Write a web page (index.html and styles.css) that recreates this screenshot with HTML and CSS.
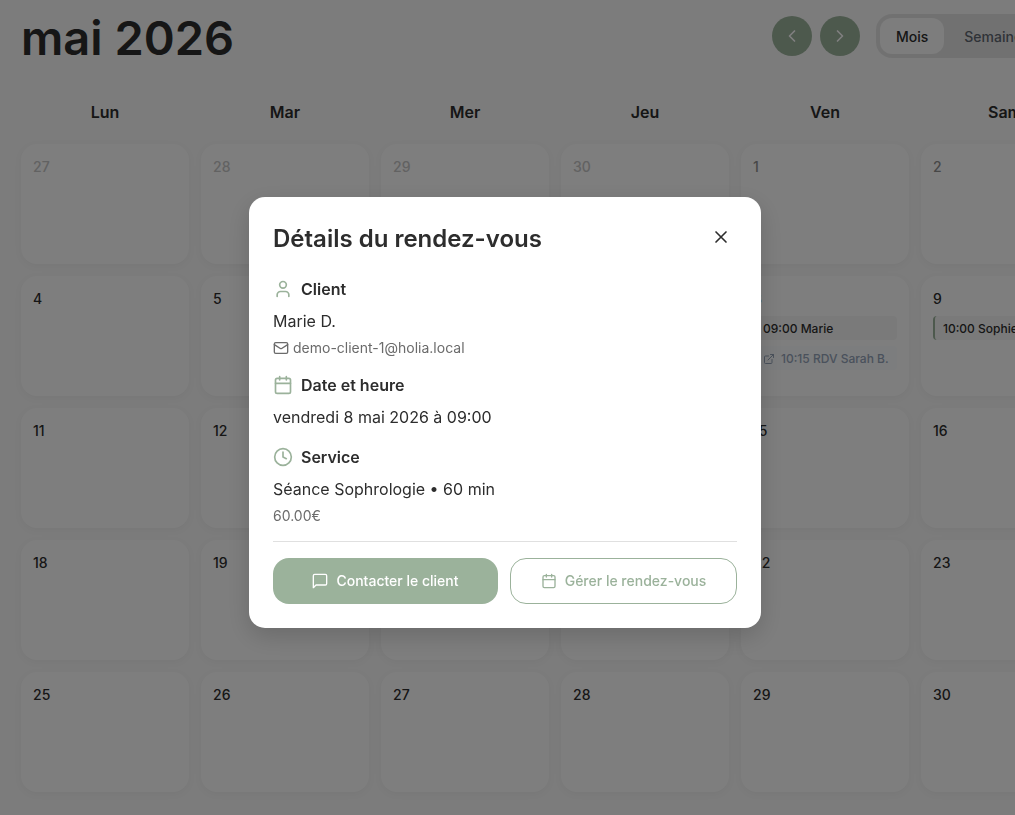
FILE: index.html
```
<!DOCTYPE html>
<html lang="fr">
<head>
    <meta charset="utf-8">
    <title>Calendrier</title>
    <link rel="stylesheet" href="styles.css">
</head>
<body>
    <main class="page">
        <header class="header">
            <h1>mai 2026</h1>
            <div class="controls">
                <button class="nav-btn" aria-label="Mois précédent">
                    <svg class="icon" width="20" height="20" viewBox="0 0 24 24"><path d="M15 18l-6-6 6-6"/></svg>
                </button>
                <button class="nav-btn" aria-label="Mois suivant">
                    <svg class="icon" width="20" height="20" viewBox="0 0 24 24"><path d="M9 18l6-6-6-6"/></svg>
                </button>
                <div class="views">
                    <button class="active">Mois</button>
                    <button>Semaine</button>
                </div>
            </div>
        </header>

        <div class="week days">
            <div>Lun</div><div>Mar</div><div>Mer</div><div>Jeu</div><div>Ven</div><div>Sam</div><div>Dim</div>
        </div>

        <div class="week cells">
            <div class="cell other">27</div>
            <div class="cell other">28</div>
            <div class="cell other">29</div>
            <div class="cell other">30</div>
            <div class="cell past">1</div>
            <div class="cell past">2</div>
            <div class="cell past">3</div>
            <div class="cell">4</div>
            <div class="cell">5</div>
            <div class="cell">6</div>
            <div class="cell">7</div>
            <div class="cell">8
                <div class="event">09:00 Marie</div>
                <div class="event external">
                    <svg class="icon" width="12" height="12" viewBox="0 0 24 24"><path d="M15 3h6v6M10 14L21 3M18 13v6a2 2 0 0 1-2 2H5a2 2 0 0 1-2-2V8a2 2 0 0 1 2-2h6"/></svg>
                    10:15 RDV Sarah B.
                </div>
            </div>
            <div class="cell">9
                <div class="event">10:00 Sophie</div>
            </div>
            <div class="cell">10</div>
            <div class="cell">11</div>
            <div class="cell">12</div>
            <div class="cell">13</div>
            <div class="cell">14</div>
            <div class="cell">15</div>
            <div class="cell">16</div>
            <div class="cell">17</div>
            <div class="cell">18</div>
            <div class="cell">19</div>
            <div class="cell">20</div>
            <div class="cell">21</div>
            <div class="cell">22</div>
            <div class="cell">23</div>
            <div class="cell">24</div>
            <div class="cell">25</div>
            <div class="cell">26</div>
            <div class="cell">27</div>
            <div class="cell">28</div>
            <div class="cell">29</div>
            <div class="cell">30</div>
            <div class="cell">31</div>
        </div>
    </main>

    <div class="overlay">
        <div class="modal" role="dialog" aria-modal="true" aria-labelledby="modal-title">
            <div class="modal-header">
                <h2 id="modal-title">Détails du rendez-vous</h2>
                <button class="close" aria-label="Fermer">
                    <svg class="icon" width="20" height="20" viewBox="0 0 24 24"><path d="M18 6L6 18M6 6l12 12"/></svg>
                </button>
            </div>

            <section>
                <h3>
                    <svg class="icon" width="20" height="20" viewBox="0 0 24 24"><path d="M19 21v-2a4 4 0 0 0-4-4H9a4 4 0 0 0-4 4v2"/><circle cx="12" cy="7" r="4"/></svg>
                    Client
                </h3>
                <p>Marie D.</p>
                <p class="small">
                    <svg class="icon" width="16" height="16" viewBox="0 0 24 24"><rect x="2" y="4" width="20" height="16" rx="2"/><path d="M22 7l-9 5.700a2 2 0 0 1-2 0L2 7"/></svg>
                    demo-client-1@holia.local
                </p>
            </section>

            <section>
                <h3>
                    <svg class="icon" width="20" height="20" viewBox="0 0 24 24"><rect x="3" y="4" width="18" height="18" rx="2"/><path d="M8 2v4M16 2v4M3 10h18"/></svg>
                    Date et heure
                </h3>
                <p>vendredi 8 mai 2026 à 09:00</p>
            </section>

            <section>
                <h3>
                    <svg class="icon" width="20" height="20" viewBox="0 0 24 24"><circle cx="12" cy="12" r="10"/><path d="M12 6v6l4 2"/></svg>
                    Service
                </h3>
                <p>Séance Sophrologie • 60 min</p>
                <p class="small">60.00€</p>
            </section>

            <div class="actions">
                <button class="primary">
                    <svg class="icon" width="16" height="16" viewBox="0 0 24 24"><path d="M22 16a2 2 0 0 1-2 2H6l-4 4V4a2 2 0 0 1 2-2h16a2 2 0 0 1 2 2z"/></svg>
                    Contacter le client
                </button>
                <button class="outline">
                    <svg class="icon" width="16" height="16" viewBox="0 0 24 24"><rect x="3" y="4" width="18" height="18" rx="2"/><path d="M8 2v4M16 2v4M3 10h18"/></svg>
                    Gérer le rendez-vous
                </button>
            </div>
        </div>
    </div>
</body>
</html>
```

FILE: styles.css
```
* {
    box-sizing: border-box;
}
html {
    overflow: hidden;
}
body {
    margin: 0;
    background: #f8f8f8;
    color: #2d2d2d;
    font-family: Inter, "Liberation Sans", sans-serif;
    font-size: 16px;
    line-height: 24px;
}
h1, h2, h3, p {
    margin: 0;
}
button {
    font-family: inherit;
    font-size: 14px;
    font-weight: 500;
    line-height: 20px;
    border: 0;
    background: none;
    color: inherit;
    cursor: pointer;
}
.icon {
    fill: none;
    stroke: currentColor;
    stroke-width: 2;
    stroke-linecap: round;
    stroke-linejoin: round;
    flex-shrink: 0;
}

/* calendar */
.page {
    min-width: 1290px;
    padding: 8px 21px 22px;
}
.header {
    display: grid;
    grid-template-columns: 1fr 497px;
    align-items: center;
}
.header h1 {
    padding-top: 4px;
    font-size: 47px;
    font-weight: 600;
    line-height: 52px;
}
.controls {
    display: flex;
    align-items: center;
    gap: 8px;
}
.nav-btn {
    display: flex;
    align-items: center;
    justify-content: center;
    width: 40px;
    height: 40px;
    padding: 0;
    border-radius: 50%;
    background: #9bb29b;
    color: #fff;
}
.views {
    display: flex;
    gap: 4px;
    margin-left: 8px;
    padding: 4px;
    border-radius: 16px;
    background: #e3e3e3;
    color: #5f6670;
}
.views button {
    height: 36px;
    padding: 2px 16px 0;
    border-radius: 12px;
}
.views .active {
    background: #fafafa;
    color: #2d2d2d;
}
.week {
    display: grid;
    grid-template-columns: repeat(7, 1fr);
    gap: 12px;
}
.days {
    margin-top: 28px;
    padding: 8px 0;
    text-align: center;
    font-weight: 600;
}
.cells {
    margin-top: 12px;
}
.cell {
    height: 120px;
    padding: 12px;
    border-radius: 16px;
    background: #fdfdfd;
    box-shadow: 0 2px 8px rgba(0, 0, 0, 0.04);
    font-size: 14px;
    font-weight: 500;
    line-height: 22px;
}
.other {
    color: #c4c4c4;
}
.past {
    color: #8f8f8f;
}
.event {
    display: flex;
    align-items: center;
    gap: 6px;
    height: 24px;
    margin-top: 6px;
    padding: 2px 8px 0;
    border-left: 2px solid #9bb29b;
    border-radius: 4px;
    background: #f5f5f5;
    font-size: 12px;
    white-space: nowrap;
}
.external {
    border-left-color: #cbd5e1;
    background: #f8fafc;
    color: #94a3b8;
}

/* modal */
.overlay {
    position: fixed;
    inset: 0;
    display: flex;
    align-items: center;
    justify-content: center;
    padding: 10px 5px 0 0;
    background: rgba(0, 0, 0, 0.5);
}
.modal {
    width: 512px;
    max-width: 100%;
    padding: 24px;
    border-radius: 16px;
    background: #fff;
    box-shadow: 0 8px 24px rgba(0, 0, 0, 0.16);
}
.modal-header {
    display: flex;
    align-items: center;
    justify-content: space-between;
    margin-bottom: 24px;
}
.modal-header h2 {
    padding-top: 4px;
    font-size: 24px;
    font-weight: 600;
    line-height: 28px;
}
.close {
    display: flex;
    padding: 6px;
}
.modal section {
    margin-bottom: 16px;
}
.modal h3 {
    display: flex;
    align-items: center;
    gap: 8px;
    margin-bottom: 8px;
    font-size: 16px;
    font-weight: 600;
}
.modal h3 .icon {
    color: #9bb29b;
}
.modal .small {
    display: flex;
    align-items: center;
    gap: 4px;
    padding-top: 6px;
    color: #6b6b6b;
    font-size: 14px;
    line-height: 18px;
}
.actions {
    display: flex;
    gap: 12px;
    padding-top: 16px;
    border-top: 1px solid #e0e0e0;
}
.actions button {
    display: flex;
    align-items: center;
    justify-content: center;
    flex: 1;
    gap: 8px;
    height: 46px;
    border-radius: 16px;
}
.primary {
    background: #9bb29b;
    color: #fff;
}
.actions .outline {
    border: 1px solid #9bb29b;
    color: #9bb29b;
}
```
